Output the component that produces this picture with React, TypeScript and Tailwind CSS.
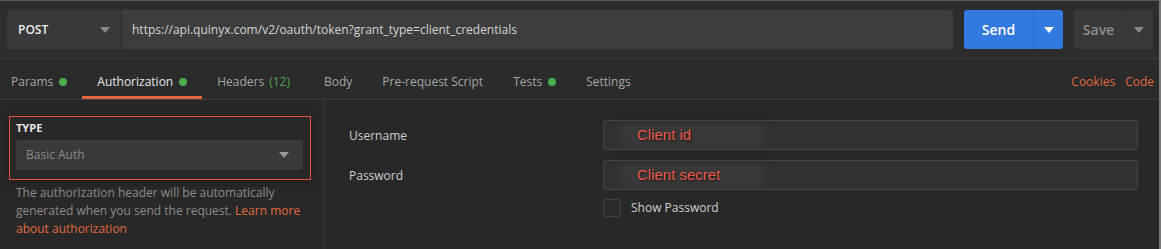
import React from "react";

const Caret = ({ className = "" }: { className?: string }) => (
  <svg width="10" height="6" viewBox="0 0 10 6" className={className}>
    <path d="M0 0 L10 0 L5 6 Z" fill="currentColor" />
  </svg>
);

const Dot = () => <span className="inline-block w-[8px] h-[8px] rounded-full bg-[#4cae4f] ml-[6px]" />;

function Tab({
  label,
  dot,
  extra,
  active,
  wide,
}: {
  label: string;
  dot?: boolean;
  extra?: string;
  active?: boolean;
  wide?: boolean;
}) {
  return (
    <div
      className={`relative h-full flex items-center pl-[15px] ${wide ? "pr-[19px]" : "pr-[15px]"} pt-[6px] ${
        active ? "text-[#e6e6e6]" : "text-[#a6a6a6]"
      }`}
    >
      <span>{label}</span>
      {extra && <span className="ml-[5px] text-[#52a852]">{extra}</span>}
      {dot && <Dot />}
      {active && <span className="absolute left-0 right-0 bottom-0 h-[3px] bg-[#e3663e]" />}
    </div>
  );
}

function Redacted({ text }: { text: string }) {
  return (
    <div className="relative h-full flex items-center pl-[33px]">
      <span className="absolute left-[16px] w-[145px] top-[5px] bottom-[5px] bg-[#3a3a3a] blur-[3px]" />
      <span
        className="relative text-[15px] text-[#ec5b4c]"
        style={{ fontFamily: '"Liberation Sans", Arial, sans-serif', textShadow: "1px 1px 2px #111" }}
      >
        {text}
      </span>
    </div>
  );
}

export default function App() {
  return (
    <div
      className="w-[1161px] h-[249px] bg-[#282828] border-t border-[#595959] border-r-2 border-r-[#7a7a7a] overflow-hidden text-[12px] flex flex-col"
      style={{ fontFamily: '"Open Sans", "Noto Sans", sans-serif' }}
    >
      {/* top bar */}
      <div className="h-[58px] shrink-0 bg-[#2d2d2d] flex items-center pl-[7px] pr-[6px] border-b border-[#3c3c3c]">
        <div className="w-[114px] h-[39px] bg-[#393939] rounded-l-[3px] flex items-center justify-between pl-[11px] pr-[11px]">
          <span className="text-[#ececec] font-semibold text-[12px]">POST</span>
          <Caret className="text-[#8a8a8a]" />
        </div>
        <div className="flex-1 h-[39px] bg-[#3d3d3d] rounded-r-[3px] ml-[1px] flex items-center pl-[10px] text-[#d6d6d6] text-[12px]">
          https://api.quinyx.com/v2/oauth/token?grant_type=client_credentials
        </div>
        <div className="ml-[11px] h-[39px] w-[99px] bg-[#3279e0] rounded-[3px] flex">
          <div className="w-[70px] flex items-center justify-center text-white text-[14px] font-semibold border-r border-[#2c6ac7]">
            Send
          </div>
          <div className="flex-1 flex items-center justify-center text-white">
            <Caret />
          </div>
        </div>
        <div className="ml-[11px] h-[39px] w-[79px] bg-[#393939] rounded-[3px] flex">
          <div className="w-[50px] flex items-center justify-center text-[#8e8e8e] text-[14px] font-semibold border-r border-[#333]">
            Save
          </div>
          <div className="flex-1 flex items-center justify-center text-[#8a8a8a]">
            <Caret />
          </div>
        </div>
      </div>

      {/* tabs */}
      <div className="h-[41px] shrink-0 bg-[#2b2b2b] flex items-center border-b border-[#3c3c3c]">
        <div className="flex h-full -ml-[4px]">
          <Tab label="Params" dot />
          <Tab label="Authorization" dot active />
          <Tab label="Headers" extra="(12)" wide />
          <Tab label="Body" />
          <Tab label="Pre-request Script" />
          <Tab label="Tests" dot />
          <Tab label="Settings" />
        </div>
        <div className="ml-auto flex gap-[10px] pr-[5px] pt-[6px] text-[#e0693f] text-[12px]">
          <span>Cookies</span>
          <span>Code</span>
        </div>
      </div>

      {/* body */}
      <div className="flex-1 flex">
        <div className="w-[324px] border-r border-[#3a3a3a] pl-[9px] pr-[12px] pt-[16px]">
          <div className="w-[302px] h-[64px] border border-[#e5533f] pl-[6px] pr-[7px] pt-[4px] shadow-[0_2px_6px_rgba(0,0,0,0.4)]">
            <div className="text-[11px] font-bold text-[#e8e8e8] leading-[14px]">TYPE</div>
            <div className="mt-[5px] h-[30px] bg-[#3a3a3a] rounded-[3px] flex items-center justify-between pl-[10px] pr-[14px]">
              <span className="text-[#8a8a8a] text-[12px]">Basic Auth</span>
              <Caret className="text-[#9a9a9a]" />
            </div>
          </div>
          <p className="mt-[4px] pl-[7px] text-[#8b8b8b] text-[12px] leading-[18px]">
            The authorization header will be automatically generated when you send the request.{" "}
            <span className="text-[#e0693f]">Learn more about authorization</span>
          </p>
        </div>
        <div className="flex-1 pl-[25px] pr-[21px] pt-[20px]">
          <div className="grid grid-cols-[254px_1fr] gap-y-[10px] items-center">
            <div className="text-[#d0d0d0] pt-[1px]">Username</div>
            <div className="h-[30px] bg-[#313131] border border-[#444] rounded-[3px]">
              <Redacted text="Client id" />
            </div>
            <div className="text-[#d0d0d0] pt-[1px]">Password</div>
            <div className="h-[30px] bg-[#313131] border border-[#444] rounded-[3px]">
              <Redacted text="Client secret" />
            </div>
            <div />
            <div className="flex items-center -mt-[1px]">
              <span className="w-[18px] h-[18px] border border-[#444] rounded-[3px] bg-[#2a2a2a]" />
              <span className="ml-[10px] text-[#d0d0d0]">Show Password</span>
            </div>
          </div>
        </div>
      </div>
    </div>
  );
}
